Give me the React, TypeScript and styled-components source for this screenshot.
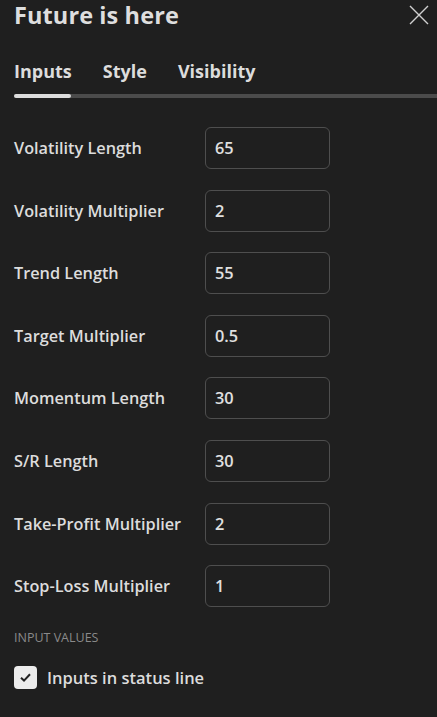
import React from 'react';
import styled, { createGlobalStyle } from 'styled-components';

const GlobalStyle = createGlobalStyle`
  html, body {
    margin: 0;
    padding: 0;
    background: #1f1f1f;
  }
  body {
    font-family: "Open Sans", Lato, sans-serif;
    color: #dcdcdc;
  }
`;

const Panel = styled.div`
  width: 437px;
  height: 717px;
  background: #1f1f1f;
  overflow: hidden;
  display: flex;
  flex-direction: column;
`;

const Header = styled.div`
  display: flex;
  align-items: center;
  justify-content: space-between;
  padding: 0 7px 0 14px;
  height: 30px;
`;

const Title = styled.h1`
  margin: 0;
  font-size: 23.5px;
  font-weight: 700;
  color: #dedede;
  letter-spacing: 0.1px;
`;

const CloseButton = styled.button`
  border: none;
  background: none;
  padding: 0;
  width: 22px;
  height: 22px;
  display: flex;
  align-items: center;
  justify-content: center;
`;

const Tabs = styled.div`
  display: flex;
  gap: 31px;
  padding: 0 14px;
  margin-top: 29px;
  height: 24px;
  align-items: center;
`;

const Tab = styled.div<{ $active?: boolean }>`
  font-size: 18px;
  font-weight: 700;
  color: #dcdcdc;
`;

const Track = styled.div`
  margin: 11px 0 0 14px;
  height: 4px;
  background: #4b4b4b;
  border-radius: 2px 0 0 2px;
  display: flex;
`;

const TrackFill = styled.div`
  width: 57px;
  height: 4px;
  background: #dcdcdc;
  border-radius: 2px;
`;

const Form = styled.div`
  display: flex;
  flex-direction: column;
  gap: 20.6px;
  padding: 29px 14px 0 14px;
`;

const Row = styled.div`
  display: grid;
  grid-template-columns: 191px 125px;
  align-items: center;
`;

const Label = styled.span`
  font-size: 16.3px;
  font-weight: 600;
  color: #dcdcdc;
`;

const Field = styled.input`
  box-sizing: border-box;
  width: 125px;
  height: 42px;
  background: transparent;
  border: 1px solid #4e4e4e;
  border-radius: 6px;
  padding: 0 9px;
  font-family: "Open Sans", Lato, sans-serif;
  font-size: 16.3px;
  font-weight: 600;
  color: #e0e0e0;
  outline: none;
`;

const Section = styled.div`
  padding: 0 14px;
  margin-top: 22px;
  font-size: 12.5px;
  color: #8a8a8a;
  text-transform: uppercase;
`;

const CheckRow = styled.label`
  display: flex;
  align-items: center;
  gap: 10px;
  padding: 0 14px;
  margin-top: 20px;
  font-size: 16.5px;
  font-weight: 600;
  color: #dcdcdc;
`;

const Box = styled.span`
  width: 23px;
  height: 23px;
  border-radius: 4px;
  background: #ececec;
  display: flex;
  align-items: center;
  justify-content: center;
`;

const inputs = [
  { label: 'Volatility Length', value: '65' },
  { label: 'Volatility Multiplier', value: '2' },
  { label: 'Trend Length', value: '55' },
  { label: 'Target Multiplier', value: '0.5' },
  { label: 'Momentum Length', value: '30' },
  { label: 'S/R Length', value: '30' },
  { label: 'Take-Profit Multiplier', value: '2' },
  { label: 'Stop-Loss Multiplier', value: '1' },
];

export default function App() {
  return (
    <>
      <GlobalStyle />
      <Panel>
        <Header>
          <Title>Future is here</Title>
          <CloseButton aria-label="Close">
            <svg width="20" height="20" viewBox="0 0 20 20">
              <path d="M1 1L19 19M19 1L1 19" stroke="#d0d0d0" strokeWidth="1.4" />
            </svg>
          </CloseButton>
        </Header>
        <Tabs>
          <Tab $active>Inputs</Tab>
          <Tab>Style</Tab>
          <Tab>Visibility</Tab>
        </Tabs>
        <Track>
          <TrackFill />
        </Track>
        <Form>
          {inputs.map((item) => (
            <Row key={item.label}>
              <Label>{item.label}</Label>
              <Field defaultValue={item.value} />
            </Row>
          ))}
        </Form>
        <Section>Input values</Section>
        <CheckRow>
          <Box>
            <svg width="13" height="13" viewBox="0 0 13 13">
              <path d="M2 6.8L5 9.6L11 3.2" fill="none" stroke="#222" strokeWidth="2" />
            </svg>
          </Box>
          Inputs in status line
        </CheckRow>
      </Panel>
    </>
  );
}
